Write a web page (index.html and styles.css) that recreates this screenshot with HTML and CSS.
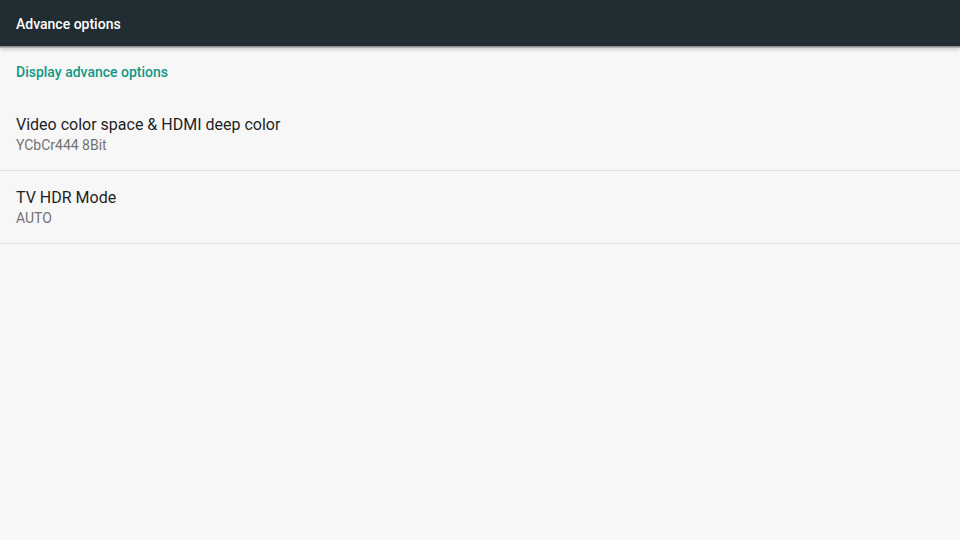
FILE: index.html
```html
<!DOCTYPE html>
<html>
<head>
<meta charset="utf-8">
<link rel="stylesheet" href="styles.css">
</head>
<body>
<header class="appbar"><span class="appbar-title">Advance options</span></header>
<main class="content">
  <div class="section-title">Display advance options</div>
  <div class="pref">
    <div class="pref-title">Video color space &amp; HDMI deep color</div>
    <div class="pref-summary">YCbCr444 8Bit</div>
  </div>
  <div class="pref">
    <div class="pref-title">TV HDR Mode</div>
    <div class="pref-summary">AUTO</div>
  </div>
</main>
</body>
</html>
```
FILE: styles.css
```css
html, body {
  margin: 0;
  padding: 0;
  width: 960px;
  height: 540px;
  overflow: hidden;
  background: #f7f7f7;
  font-family: Roboto, "Liberation Sans", sans-serif;
}
.appbar {
  height: 46px;
  background: #212d33;
  display: flex;
  align-items: center;
  padding: 0 16px;
  box-shadow: 0 1px 0 #8a8f8c, 0 2px 0 #b0b3b1, 0 4px 3px rgba(0,0,0,0.15);
  position: relative;
}
.appbar-title {
  color: #ffffff;
  font-size: 14px;
  font-weight: 500;
  margin-top: 1px;
}
.content {
  display: flex;
  flex-direction: column;
}
.section-title {
  color: #129786;
  font-size: 14px;
  font-weight: 500;
  padding: 18px 16px 0 16px;
  height: 52px;
  line-height: 16px;
  box-sizing: border-box;
}
.pref {
  height: 73px;
  box-sizing: border-box;
  padding: 17px 16px 0 16px;
  border-bottom: 1px solid #dfdfdf;
}
.pref-title {
  color: #1f1f1f;
  font-size: 16px;
  line-height: 20px;
}
.pref-summary {
  color: #737373;
  font-size: 14px;
  line-height: 18px;
  margin-top: 1px;
}
```
